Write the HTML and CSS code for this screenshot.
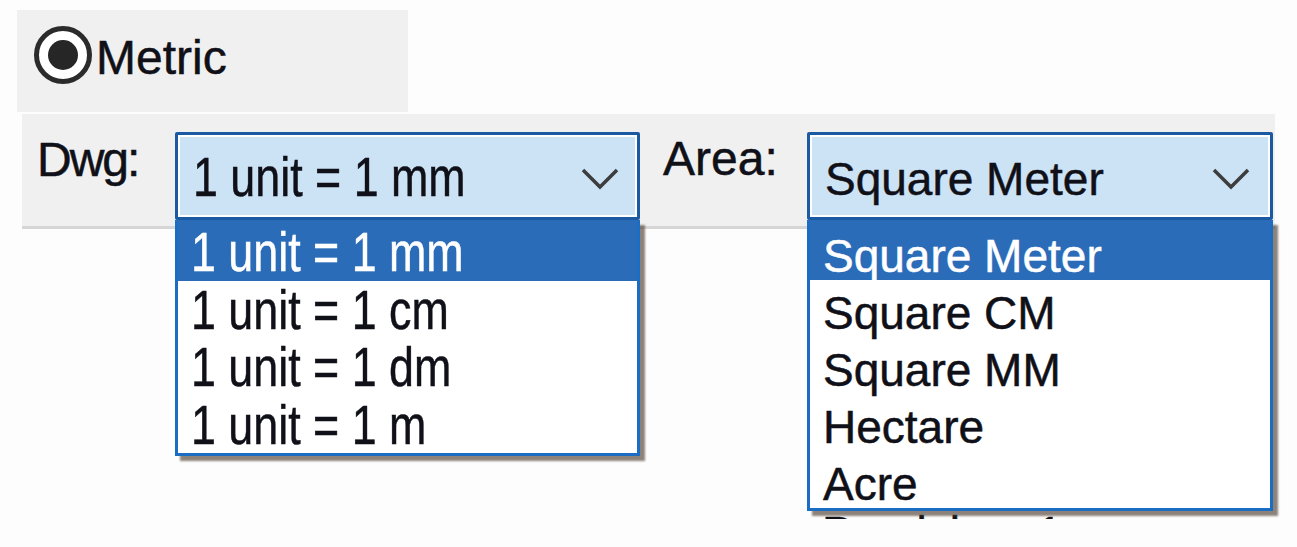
FILE: index.html
```html
<!DOCTYPE html>
<html lang="en">

<head>
    <meta charset="UTF-8">
    <meta name="viewport" content="width=device-width, initial-scale=1.0">
    <title>Units</title>
    <link rel="stylesheet" href="styles.css">
</head>

<body>
    <div class="dialog">
        <div class="unit-choice">
            <span class="radio"><span class="radio-dot"></span></span>
            <span class="radio-label">Metric</span>
        </div>

        <div class="unit-row">
            <span class="field-label dwg-label">Dwg:</span>
            <div class="combo dwg-combo">
                <div class="combo-box">
                    <span class="combo-value"><span class="narrow">1 unit = 1 mm</span></span>
                    <svg class="chevron" width="38" height="22" viewBox="0 0 38 22">
                        <path d="M2 2 L19 19 L36 2" fill="none" stroke="#3d3d3d" stroke-width="3.5" />
                    </svg>
                </div>
                <ul class="combo-list">
                    <li class="selected"><span class="narrow">1 unit = 1 mm</span></li>
                    <li><span class="narrow">1 unit = 1 cm</span></li>
                    <li><span class="narrow">1 unit = 1 dm</span></li>
                    <li><span class="narrow">1 unit = 1 m</span></li>
                </ul>
            </div>

            <span class="field-label area-label">Area:</span>
            <div class="combo area-combo">
                <div class="combo-box">
                    <span class="combo-value">Square Meter</span>
                    <svg class="chevron" width="38" height="22" viewBox="0 0 38 22">
                        <path d="M2 2 L19 19 L36 2" fill="none" stroke="#3d3d3d" stroke-width="3.5" />
                    </svg>
                </div>
                <ul class="combo-list">
                    <li class="selected">Square Meter</li>
                    <li>Square CM</li>
                    <li>Square MM</li>
                    <li>Hectare</li>
                    <li>Acre</li>
                </ul>
                <!-- next field, mostly hidden under the open list -->
                <div class="peek"><span>Precision: 1</span></div>
            </div>
        </div>
    </div>
</body>

</html>
```

FILE: styles.css
```css
html,
body {
    height: 100%;
}

body {
    margin: 0;
    min-height: 547px;
    background: #fdfdfd;
    font-family: "Liberation Sans", Arial, sans-serif;
    color: #101018;
    -webkit-text-stroke: 0.5px currentColor;
}

.dialog {
    min-height: 537px;
    padding-top: 10px;
}

.unit-choice {
    display: flex;
    align-items: flex-start;
    margin-left: 17px;
    width: 374px;
    height: 86px;
    padding: 16px 0 0 17px;
    background: #f0f0f0;
}

.radio {
    display: flex;
    align-items: center;
    justify-content: center;
    width: 48px;
    height: 48px;
    border: 5px solid #2b2b2b;
    border-radius: 50%;
    background: #fff;
}

.radio-dot {
    width: 30px;
    height: 30px;
    border-radius: 50%;
    background: #262626;
}

.radio-label {
    margin: 8px 0 0 4px;
    font-size: 48px;
    line-height: 48px;
}

.unit-row {
    display: flex;
    align-items: flex-start;
    margin: 2px 0 0 22px;
    width: 1236px;
    height: 94px;
    padding: 18px 2px 0 15px;
    background: #f0f0f0;
    border-bottom: 3px solid #d6d6d6;
}

.field-label {
    flex: none;
    font-size: 48px;
    line-height: 48px;
}

.dwg-label {
    width: 138px;
    margin-top: 4px;
    letter-spacing: -2px;
}

.area-label {
    width: 144px;
    margin: 3px 0 0 23px;
}

.combo {
    position: relative;
    flex: none;
}

.dwg-combo {
    width: 465px;
}

.area-combo {
    width: 466px;
}

.combo-box {
    display: flex;
    justify-content: space-between;
    height: 82px;
    border: 3px solid #1b5aa3;
    border-radius: 2px;
    background: #cce2f5;
    box-shadow: inset 0 0 0 2px #fff;
}

.combo-value {
    padding-left: 15px;
    white-space: nowrap;
}

/* the Dwg list uses a tall, narrow face */
.narrow {
    display: inline-block;
    transform: scaleX(0.8);
    transform-origin: left center;
}

.dwg-combo .combo-value,
.dwg-combo li {
    font-size: 56px;
}

.dwg-combo .combo-value {
    padding-top: 2px;
    line-height: 80px;
}

.area-combo .combo-value,
.area-combo li {
    font-size: 46px;
}

.area-combo .combo-value {
    padding-top: 6px;
    line-height: 76px;
}

.chevron {
    flex: none;
    margin: 33px 18px 0 0;
}

.area-combo .chevron {
    margin-right: 20px;
}

.combo-list {
    position: absolute;
    top: 100%;
    left: 0;
    right: 0;
    z-index: 2;
    margin: 0;
    padding: 0;
    list-style: none;
    background: #fff;
    border: 3px solid #1b6dc3;
    border-top-color: #2b6cb9;
    box-shadow: 5px 5px 2px rgba(80, 64, 50, 0.65);
}

.combo-list li {
    padding-left: 13px;
    white-space: nowrap;
}

.dwg-combo li {
    height: 57.5px;
    line-height: 57.5px;
}

.area-combo li {
    height: 48px;
    padding-top: 9px;
    line-height: 48px;
}

.combo-list li.selected {
    background: #2b6cb9;
    color: #fff;
}

.peek {
    position: absolute;
    top: 380px;
    left: 15px;
    height: 7px;
    overflow: hidden;
    font-size: 46px;
    line-height: 46px;
    white-space: nowrap;
}

.peek span {
    display: block;
    margin-top: -2px;
}
```
